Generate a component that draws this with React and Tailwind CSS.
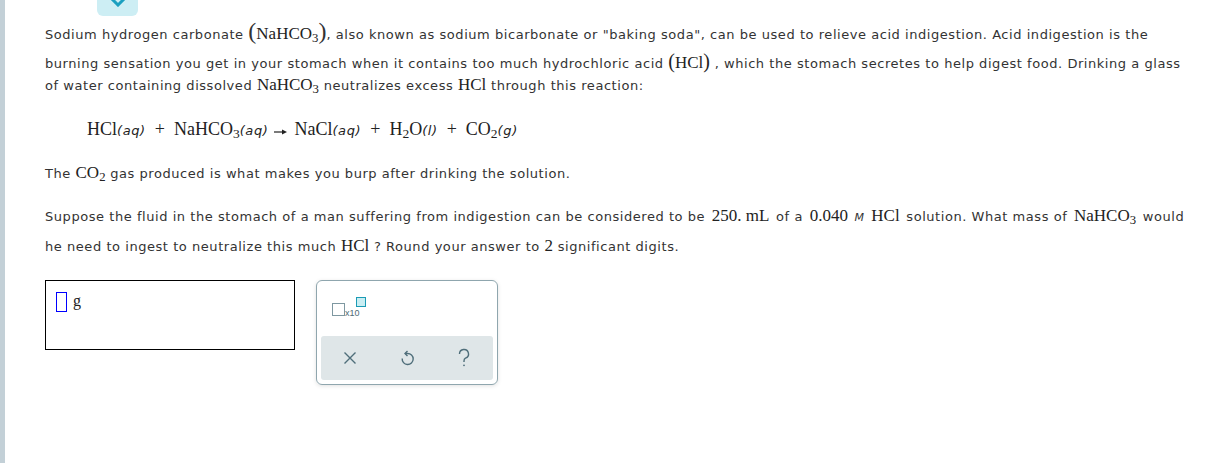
import React from "react";

const S = ({ children, cls = "" }) => (
  <span className={`font-['Liberation_Serif'] text-[17px] tracking-normal text-[#222] ${cls}`}>{children}</span>
);
const I = ({ children }) => (
  <span className="font-['DejaVu_Sans'] italic text-[13px] tracking-[0.6px]">{children}</span>
);
const E = ({ children }) => (
  <span className="font-['Liberation_Serif'] text-[18px] tracking-normal">{children}</span>
);
const Plus = () => (
  <span className="font-['Liberation_Serif'] text-[18px] tracking-normal mx-[9px]">+</span>
);
const BigParen = ({ children }) => (
  <span className="font-['Liberation_Serif'] text-[24px] text-[#333] font-light tracking-normal">{children}</span>
);

export default function App() {
  return (
    <div className="flex w-[1216px] h-[463px] bg-white overflow-hidden font-['DejaVu_Sans',sans-serif] text-[13px] tracking-[0.55px] text-[#333]">
      <div className="w-[5px] shrink-0 bg-[#c3d0d7]" />
      <div className="flex-1 pl-[40px]">
        {/* top tab */}
        <div className="ml-[52px] w-[41px] h-[16px] bg-[#cdeef4] rounded-b-[6px] flex justify-center overflow-hidden">
          <svg width="20" height="9" viewBox="0 0 20 9" className="-mt-[2px]">
            <path d="M3 0 L10 7 L17 0" fill="none" stroke="#1ba0c0" strokeWidth="3" strokeLinejoin="miter" />
          </svg>
        </div>

        <div className="whitespace-nowrap">
          <div className="h-[30px] leading-[30px]">
            Sodium hydrogen carbonate <BigParen>(</BigParen>
            <S>NaHCO<sub>3</sub></S>
            <BigParen>)</BigParen>, also known as sodium bicarbonate or "baking soda", can be used to relieve acid indigestion. Acid indigestion is the
          </div>
          <div className="h-[30px] leading-[30px]">
            burning sensation you get in your stomach when it contains too much hydrochloric acid{" "}
            <span className="font-['Liberation_Serif'] text-[20px] text-[#222] tracking-normal">(</span>
            <S>HCl</S>
            <span className="font-['Liberation_Serif'] text-[20px] text-[#222] tracking-normal">)</span> , which the stomach secretes to help digest food. Drinking a glass
          </div>
          <div className="h-[18px] leading-[18px]">
            of water containing dissolved <S>NaHCO<sub>3</sub></S> neutralizes excess <S>HCl</S> through this reaction:
          </div>

          <div className="mt-[23px] h-[24px] leading-[24px] pl-[42px] text-[#222] tracking-normal">
            <E>HCl</E>
            <I>(aq)</I>
            <Plus />
            <E>NaHCO<sub>3</sub></E>
            <I>(aq)</I>
            <svg width="14" height="8" viewBox="0 0 14 8" className="inline-block align-middle mx-[6px]">
              <path d="M0 4 H9" stroke="#222" strokeWidth="1.2" />
              <path d="M8 1.5 L13 4 L8 6.5 Z" fill="#222" />
            </svg>
            <E>NaCl</E>
            <I>(aq)</I>
            <Plus />
            <E>H<sub>2</sub>O</E>
            <I>(l)</I>
            <Plus />
            <E>CO<sub>2</sub></E>
            <I>(g)</I>
          </div>

          <div className="mt-[20px] h-[24px] leading-[24px]">
            The <S>CO<sub>2</sub></S> gas produced is what makes you burp after drinking the solution.
          </div>

          <div className="mt-[16px] h-[30px] leading-[30px]">
            Suppose the fluid in the stomach of a man suffering from indigestion can be considered to be <S cls="mx-[2px]">250. mL</S> of a{" "}
            <S cls="mx-[2px]">0.040</S> <span className="font-['DejaVu_Sans'] italic text-[11px]">M</span> <S cls="mx-[2px]">HCl</S> solution. What mass of{" "}
            <S cls="mx-[2px]">NaHCO<sub>3</sub></S> would
          </div>
          <div className="h-[30px] leading-[30px]">
            he need to ingest to neutralize this much <S>HCl</S> ? Round your answer to <S>2</S> significant digits.
          </div>
        </div>

        <div className="mt-[19px] flex items-start gap-[21px]">
          <div className="w-[250px] h-[70px] border border-black pt-[11px] pl-[10px] flex items-start gap-[6px]">
            <div className="w-[11px] h-[20px] border border-[#0000ff]" />
            <span className="font-['Liberation_Serif'] text-[16px] text-[#222] leading-[18px] tracking-normal">g</span>
          </div>

          <div className="w-[182px] h-[105px] border border-[#8fa6ae] rounded-[6px] shadow-[0_1px_4px_rgba(0,0,0,0.12)] px-[4px] pt-[16px] flex flex-col">
            <div className="h-[39px] pl-[10px]">
              <div className="relative w-[40px] h-[24px]">
                <div className="absolute left-[1px] top-[6px] w-[13px] h-[13px] border-[1.5px] border-[#7e98a1]" />
                <span className="absolute left-[14px] top-[12px] font-['Liberation_Sans'] text-[9px] leading-[9px] tracking-normal text-[#4d6b76]">x10</span>
                <div className="absolute left-[25px] top-0 w-[10px] h-[10px] border-[1.5px] border-[#1b9bb5] bg-[#c9eef3]" />
              </div>
            </div>
            <div className="h-[44px] bg-[#dfe6e8] rounded-[3px] grid grid-cols-3 items-center justify-items-center">
              <svg width="16" height="16" viewBox="0 0 16 16">
                <path d="M2.5 2.5 L13.5 13.5 M13.5 2.5 L2.5 13.5" stroke="#4f6e7a" strokeWidth="1.4" />
              </svg>
              <svg width="16" height="18" viewBox="0 0 16 18">
                <path d="M6.5 4.5 H8.5 A5.5 5.5 0 1 1 3.2 9.5" fill="none" stroke="#4f6e7a" strokeWidth="1.4" />
                <path d="M8.5 2 L6 4.5 L8.5 7" fill="none" stroke="#4f6e7a" strokeWidth="1.4" />
              </svg>
              <svg width="16" height="20" viewBox="0 0 16 20">
                <path d="M3.5 6 A4.5 4.5 0 1 1 9.5 10.2 C8.3 10.8 8 11.6 8 13 V14" fill="none" stroke="#4f6e7a" strokeWidth="1.4" />
                <circle cx="8" cy="17.3" r="0.9" fill="#4f6e7a" />
              </svg>
            </div>
          </div>
        </div>
      </div>
    </div>
  );
}
